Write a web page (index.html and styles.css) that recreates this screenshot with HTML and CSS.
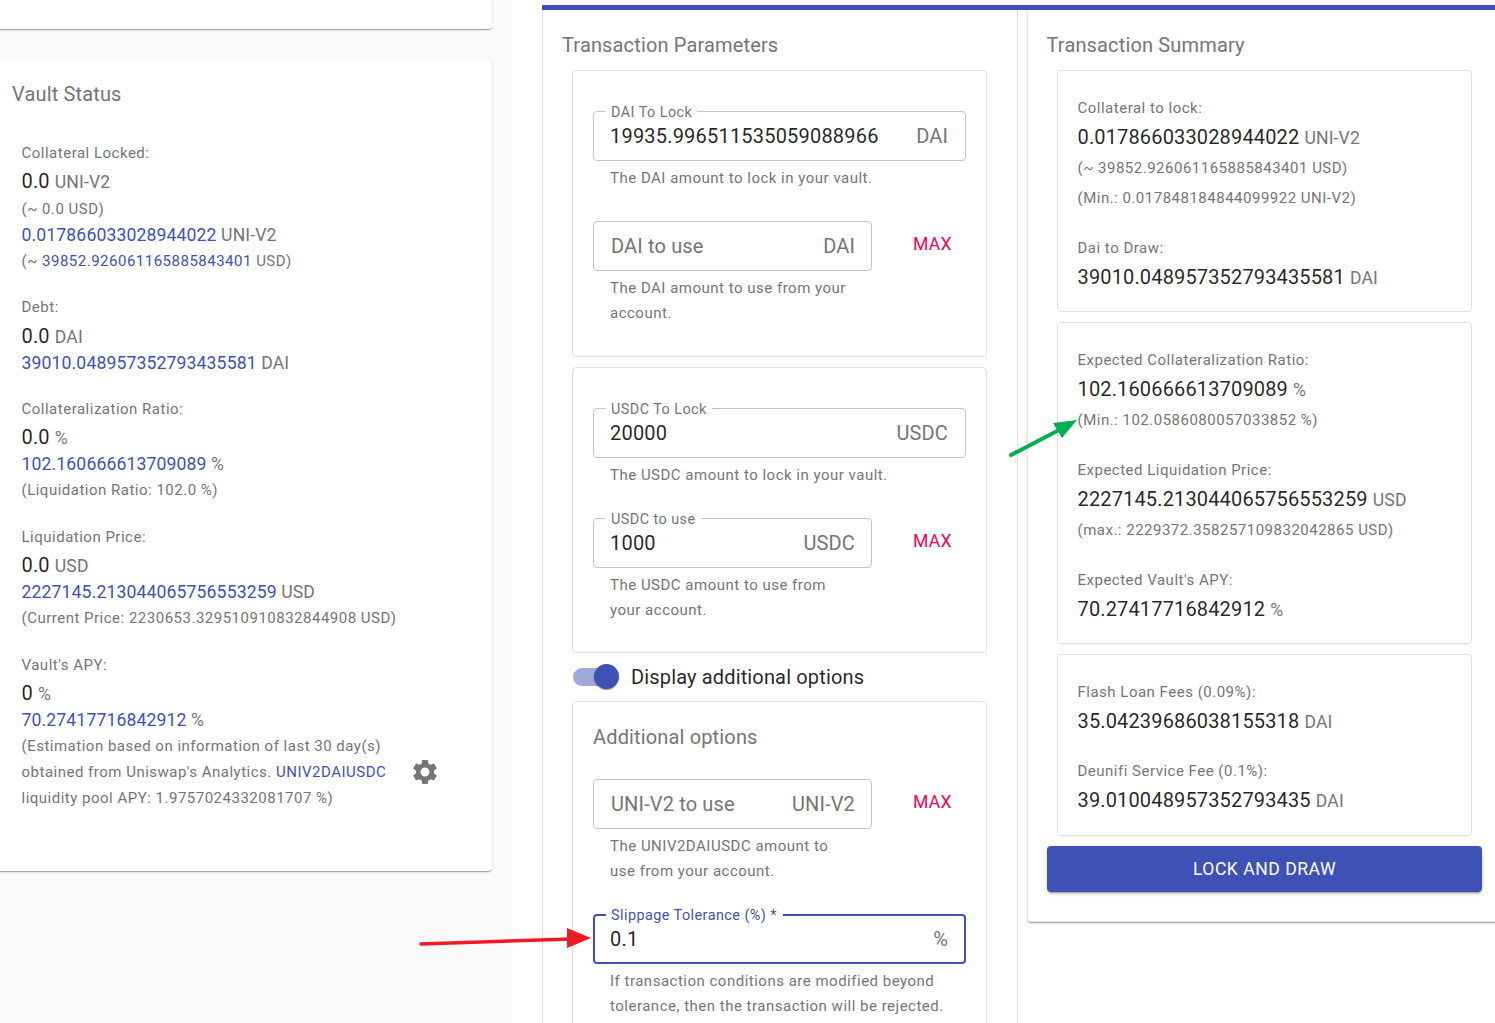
FILE: index.html
```html
<!DOCTYPE html>
<html lang="en">
<head>
    <meta charset="UTF-8">
    <meta name="viewport" content="width=device-width, initial-scale=1.0">
    <title>Vault</title>
    <link rel="stylesheet" href="styles.css">
</head>
<body>
    <div class="page">
        <aside class="side">
            <div class="side-card top-card"></div>
            <section class="side-card vault-card">
                <h2 class="title">Vault Status</h2>

                <div class="group">
                    <p class="label">Collateral Locked:</p>
                    <p class="big">0.0 <span class="unit">UNI-V2</span></p>
                    <p class="sub">(~ 0.0 USD)</p>
                    <p class="blue"><span class="accent">0.017866033028944022</span> <span class="unit">UNI-V2</span></p>
                    <p class="sub">(~ <span class="accent">39852.926061165885843401</span> USD)</p>
                </div>

                <div class="group debt">
                    <p class="label">Debt:</p>
                    <p class="big">0.0 <span class="unit">DAI</span></p>
                    <p class="blue"><span class="accent">39010.048957352793435581</span> <span class="unit">DAI</span></p>
                </div>

                <div class="group">
                    <p class="label">Collateralization Ratio:</p>
                    <p class="big">0.0 <span class="unit">%</span></p>
                    <p class="blue"><span class="accent">102.160666613709089</span> <span class="unit">%</span></p>
                    <p class="sub">(Liquidation Ratio: 102.0 %)</p>
                </div>

                <div class="group">
                    <p class="label">Liquidation Price:</p>
                    <p class="big">0.0 <span class="unit">USD</span></p>
                    <p class="blue"><span class="accent">2227145.213044065756553259</span> <span class="unit">USD</span></p>
                    <p class="sub">(Current Price: 2230653.329510910832844908 USD)</p>
                </div>

                <div class="group">
                    <p class="label">Vault's APY:</p>
                    <p class="big">0 <span class="unit">%</span></p>
                    <p class="blue"><span class="accent">70.27417716842912</span> <span class="unit">%</span></p>
                    <div class="apy-note">
                        <p class="sub note-text">(Estimation based on information of last 30 day(s) obtained from Uniswap's Analytics. <span class="link">UNIV2DAIUSDC</span> liquidity pool APY: 1.9757024332081707 %)</p>
                        <svg class="gear" viewBox="0 0 24 24"><path d="M19.14 12.94c.04-.3.06-.61.06-.94 0-.32-.02-.64-.07-.94l2.03-1.58c.18-.14.23-.41.12-.61l-1.92-3.32c-.12-.22-.37-.29-.59-.22l-2.39.96c-.5-.38-1.03-.7-1.62-.94l-.36-2.54c-.04-.24-.24-.41-.48-.41h-3.84c-.24 0-.43.17-.47.41l-.36 2.54c-.59.24-1.13.57-1.62.94l-2.39-.96c-.22-.08-.47 0-.59.22L2.74 8.87c-.12.21-.08.47.12.61l2.03 1.58c-.05.3-.09.63-.09.94s.02.64.07.94l-2.03 1.58c-.18.14-.23.41-.12.61l1.92 3.32c.12.22.37.29.59.22l2.39-.96c.5.38 1.03.7 1.62.94l.36 2.54c.05.24.24.41.48.41h3.84c.24 0 .44-.17.47-.41l.36-2.54c.59-.24 1.13-.56 1.62-.94l2.39.96c.22.08.47 0 .59-.22l1.92-3.32c.12-.22.07-.47-.12-.61l-2.01-1.58zM12 15.6c-1.98 0-3.6-1.62-3.6-3.6s1.62-3.6 3.6-3.6 3.6 1.62 3.6 3.6-1.62 3.6-3.6 3.6z"/></svg>
                    </div>
                </div>
            </section>
        </aside>

        <main class="main">
            <div class="top-bar"></div>
            <div class="columns">
                <section class="params">
                    <h2 class="title">Transaction Parameters</h2>

                    <div class="box">
                        <div class="field">
                            <span class="field-label">DAI To Lock</span>
                            <span class="value">19935.996511535059088966</span>
                            <span class="suffix">DAI</span>
                        </div>
                        <p class="help">The DAI amount to lock in your vault.</p>

                        <div class="field-row">
                            <div class="field short">
                                <span class="placeholder">DAI to use</span>
                                <span class="suffix">DAI</span>
                            </div>
                            <span class="max">MAX</span>
                        </div>
                        <p class="help narrow">The DAI amount to use from your account.</p>
                    </div>

                    <div class="box tight">
                        <div class="field">
                            <span class="field-label">USDC To Lock</span>
                            <span class="value">20000</span>
                            <span class="suffix">USDC</span>
                        </div>
                        <p class="help">The USDC amount to lock in your vault.</p>

                        <div class="field-row">
                            <div class="field short">
                                <span class="field-label">USDC to use</span>
                                <span class="value">1000</span>
                                <span class="suffix">USDC</span>
                            </div>
                            <span class="max">MAX</span>
                        </div>
                        <p class="help narrow">The USDC amount to use from your account.</p>
                    </div>

                    <div class="toggle-row">
                        <span class="toggle"><span class="knob"></span></span>
                        <span class="toggle-text">Display additional options</span>
                    </div>

                    <div class="box options">
                        <h2 class="title">Additional options</h2>
                        <div class="field-row">
                            <div class="field short">
                                <span class="placeholder">UNI-V2 to use</span>
                                <span class="suffix">UNI-V2</span>
                            </div>
                            <span class="max">MAX</span>
                        </div>
                        <p class="help narrow">The UNIV2DAIUSDC amount to use from your account.</p>

                        <div class="field focused">
                            <span class="field-label">Slippage Tolerance (%) *</span>
                            <span class="value">0.1</span>
                            <span class="suffix">%</span>
                        </div>
                        <p class="help">If transaction conditions are modified beyond tolerance, then the transaction will be rejected.</p>
                    </div>
                </section>

                <section class="summary">
                    <h2 class="title">Transaction Summary</h2>

                    <div class="box sum-box">
                        <p class="label">Collateral to lock:</p>
                        <p class="sum-val">0.017866033028944022 <span class="unit">UNI-V2</span></p>
                        <p class="sum-sub">(~ 39852.926061165885843401 USD)</p>
                        <p class="sum-sub">(Min.: 0.017848184844099922 UNI-V2)</p>
                        <p class="label gap">Dai to Draw:</p>
                        <p class="sum-val">39010.048957352793435581 <span class="unit">DAI</span></p>
                    </div>

                    <div class="box sum-box">
                        <p class="label">Expected Collateralization Ratio:</p>
                        <p class="sum-val">102.160666613709089 <span class="unit">%</span></p>
                        <p class="sum-sub">(Min.: 102.0586080057033852 %)</p>
                        <p class="label gap">Expected Liquidation Price:</p>
                        <p class="sum-val">2227145.213044065756553259 <span class="unit">USD</span></p>
                        <p class="sum-sub">(max.: 2229372.358257109832042865 USD)</p>
                        <p class="label gap">Expected Vault's APY:</p>
                        <p class="sum-val">70.27417716842912 <span class="unit">%</span></p>
                    </div>

                    <div class="box sum-box fees">
                        <p class="label">Flash Loan Fees (0.09%):</p>
                        <p class="sum-val">35.04239686038155318 <span class="unit">DAI</span></p>
                        <p class="label gap">Deunifi Service Fee (0.1%):</p>
                        <p class="sum-val">39.010048957352793435 <span class="unit">DAI</span></p>
                    </div>

                    <button class="submit">LOCK AND DRAW</button>
                </section>
            </div>
        </main>

        <!-- arrows drawn on top of the screenshot -->
        <svg class="arrow arrow-red" viewBox="0 0 180 24">
            <path d="M2 18 L152 13" stroke="#ed1c24" stroke-width="3.5" stroke-linecap="round"/>
            <path d="M148 2 L172 12 L148 22 Z" fill="#ed1c24"/>
        </svg>
        <svg class="arrow arrow-green" viewBox="0 0 70 40">
            <path d="M2 37 L50 12" stroke="#00b050" stroke-width="4" stroke-linecap="round"/>
            <path d="M44 5 L68 2 L53 20 Z" fill="#00b050"/>
        </svg>
    </div>
</body>
</html>
```

FILE: styles.css
```css
html, body {
    margin: 0;
    padding: 0;
    height: 1023px;
    overflow: hidden;
    background-color: #fff;
}

body {
    font-family: "Roboto", "Liberation Sans", sans-serif;
    color: rgba(0, 0, 0, 0.87);
}

p, h2 {
    margin: 0;
}

.page {
    position: relative;
    display: flex;
    height: 1023px;
    overflow: hidden;
}

/* left column */
.side {
    flex: 0 0 512px;
    box-sizing: border-box;
    padding: 0 20px 0 0;
    background-color: #fafafa;
}

.side-card {
    margin-left: -8px;
    background-color: #fff;
    border-radius: 4px;
    box-shadow: 0 2px 1px -1px rgba(0, 0, 0, 0.2), 0 1px 1px 0 rgba(0, 0, 0, 0.14), 0 1px 3px 0 rgba(0, 0, 0, 0.12);
}

.top-card {
    height: 29px;
    margin-bottom: 30px;
}

.vault-card {
    height: 812px;
    box-sizing: border-box;
    padding: 20px;
}

.title {
    font-size: 20px;
    font-weight: 400;
    line-height: 30px;
    letter-spacing: 0.15px;
    color: #757575;
}

.group {
    padding-left: 9.5px;
    margin-top: 20px;
}

.group.debt {
    margin-top: 19px;
}

.group.debt + .group {
    margin-top: 19px;
}

.debt .big {
    margin-top: 1px;
}

.big + .sub {
    margin-top: 1px;
}

.vault-card .title {
    margin-bottom: 30px;
}

.label {
    font-size: 15px;
    line-height: 28px;
    letter-spacing: 0.5px;
    color: #757575;
}

.big {
    font-size: 20px;
    line-height: 28px;
    letter-spacing: 0.15px;
}

.blue {
    font-size: 17.6px;
    line-height: 26px;
    letter-spacing: 0.13px;
}

.sub {
    font-size: 15px;
    line-height: 26px;
    letter-spacing: 0.5px;
    color: #757575;
}

.unit {
    font-size: 17.6px;
    line-height: 1;
    letter-spacing: 0.13px;
    color: #757575;
}

.accent, .link {
    color: #3f51b5;
}

.apy-note {
    display: flex;
    align-items: center;
}

.note-text {
    width: 372px;
}

.gear {
    width: 30px;
    height: 30px;
    margin: 0 0 0 16.5px;
    fill: #757575;
}

/* right area */
.main {
    flex: 1;
    min-width: 0;
    padding: 5px 0 0 30px;
}

.top-bar {
    height: 5px;
    background-color: #3f51b5;
}

.columns {
    display: flex;
    align-items: flex-start;
    gap: 9px;
}

.params {
    flex: 0 0 476px;
    box-sizing: border-box;
    height: 1100px;
    padding: 20px 30px 0 29px;
    border-left: 1px solid #e0e0e0;
    border-right: 1px solid #e0e0e0;
}

.params > .title {
    margin: 0 0 10px -10px;
}

.box {
    box-sizing: border-box;
    padding: 40px 20px 30px;
    border: 1px solid #e0e0e0;
    border-radius: 4px;
    margin-bottom: 10px;
}

.box.tight {
    padding-bottom: 29px;
}

.field {
    position: relative;
    display: flex;
    align-items: center;
    justify-content: space-between;
    box-sizing: border-box;
    height: 50px;
    padding: 0 17px 0 16px;
    border: 1px solid #c4c4c4;
    border-radius: 4px;
    font-size: 20px;
}

.field.short {
    width: 279px;
    padding-right: 16px;
}

.field.focused {
    border: 2px solid #3f51b5;
    padding: 0 16px 0 15px;
}

.field-label {
    position: absolute;
    top: -8px;
    left: 12px;
    padding: 0 5px;
    background-color: #fff;
    font-size: 14.4px;
    line-height: 17px;
    letter-spacing: 0.45px;
    color: #757575;
}

.focused .field-label {
    top: -9px;
    left: 11px;
    padding: 0 6px 0 5px;
    color: #3f51b5;
}

.value {
    letter-spacing: 0.2px;
}

.suffix, .placeholder {
    letter-spacing: 0.15px;
    color: #757575;
}

.placeholder {
    margin-left: 1px;
}

.field-row {
    display: flex;
    align-items: flex-start;
    margin-top: 30px;
}

.max {
    margin-left: 41px;
    font-size: 17.6px;
    line-height: 46px;
    letter-spacing: 0.2px;
    color: #f50057;
}

.help {
    margin: 5px 0 30px;
    padding-left: 17px;
    font-size: 15px;
    line-height: 25px;
    letter-spacing: 0.5px;
    color: #757575;
}

.help.narrow {
    width: 244px;
    margin-bottom: 0;
}

.box .help:last-child {
    margin-bottom: 0;
}

.toggle-row {
    display: flex;
    align-items: center;
    height: 28px;
    margin-bottom: 10px;
}

.toggle {
    position: relative;
    width: 42px;
    height: 18px;
    margin-left: 1px;
    border-radius: 9px;
    background-color: #9fa8da;
}

.knob {
    position: absolute;
    top: -4px;
    right: -4px;
    width: 25px;
    height: 25px;
    border-radius: 50%;
    background-color: #3f51b5;
    box-shadow: 0 2px 1px -1px rgba(0, 0, 0, 0.2), 0 1px 1px 0 rgba(0, 0, 0, 0.14), 0 1px 3px 0 rgba(0, 0, 0, 0.12);
}

.toggle-text {
    margin-left: 16px;
    font-size: 20px;
    letter-spacing: 0.15px;
}

.options {
    padding-top: 20px;
    margin-bottom: 0;
}

.options .field-row {
    margin-top: 27px;
}

.options .focused {
    margin-top: 30px;
}

.summary {
    flex: 0 0 475px;
    box-sizing: border-box;
    height: 912px;
    padding: 20px 19px 30px 19px;
    border: 1px solid #e8e8e8;
    border-top: none;
    border-radius: 0 0 4px 4px;
    background-color: #fff;
    box-shadow: 0 2px 1px -1px rgba(0, 0, 0, 0.2), 0 1px 1px 0 rgba(0, 0, 0, 0.14), 0 1px 3px 0 rgba(0, 0, 0, 0.12);
}

.summary > .title {
    margin: 0 0 10px -0.5px;
}

.sum-box {
    width: 415px;
    margin-left: 10px;
    padding: 23px 20px 19px 19.5px;
}

.sum-box.fees {
    padding-bottom: 20px;
}

.sum-val {
    font-size: 20px;
    line-height: 30px;
    letter-spacing: 0.15px;
}

.sum-sub {
    font-size: 15px;
    line-height: 30px;
    letter-spacing: 0.5px;
    color: #757575;
}

.sum-val + .sum-sub {
    margin-top: 1px;
}

.label.gap {
    margin-top: 21px;
}

.submit {
    display: block;
    width: 435px;
    height: 46px;
    border: none;
    border-radius: 4px;
    background-color: #3f51b5;
    color: #fff;
    font-family: inherit;
    font-size: 17.6px;
    font-weight: 400;
    letter-spacing: 0.5px;
    box-shadow: 0 3px 1px -2px rgba(0, 0, 0, 0.2), 0 2px 2px 0 rgba(0, 0, 0, 0.14), 0 1px 5px 0 rgba(0, 0, 0, 0.12);
}

/* annotation arrows */
.arrow {
    position: absolute;
    fill: none;
}

.arrow-red {
    left: 419px;
    top: 926px;
    width: 180px;
    height: 24px;
}

.arrow-green {
    left: 1009px;
    top: 418px;
    width: 70px;
    height: 40px;
}
```
